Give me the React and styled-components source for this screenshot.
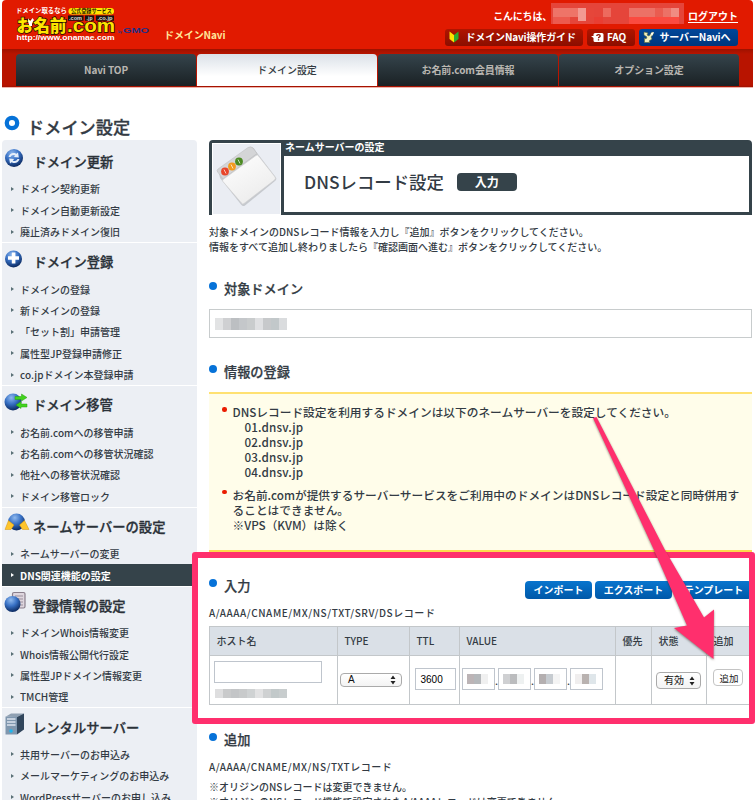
import React from "react";
import styled, { createGlobalStyle, css } from "styled-components";

const Global = createGlobalStyle`
  * { box-sizing: border-box; }
  html, body { margin: 0; padding: 0; background: #fff; }
  body {
    font-family: "Noto Sans CJK JP", "Liberation Sans", sans-serif;
    font-size: 10px;
    font-weight: 500;
    color: #333b44;
  }
  ul { list-style: none; margin: 0; padding: 0; }
  h1, h2, h3, p { margin: 0; }
`;

const Page = styled.div`
  position: relative;
  width: 755px;
  height: 800px;
  overflow: hidden;
  background: #fff;
`;

/* ---------- header ---------- */
const Header = styled.header`
  margin: 0 2px;
  width: 751px;
  height: 88px;
  border-radius: 4px 4px 0 0;
  background: #e11a00;
  border-bottom: 1px solid #eeb4ac;
  overflow: hidden;
`;
const Brand = styled.div`
  height: 49px;
  display: flex;
  justify-content: space-between;
  padding-right: 15px;
`;
const LogoWrap = styled.div`
  display: flex;
`;
const SiteName = styled.span`
  margin: 27px 0 0 11px;
  font-size: 10px;
  line-height: 16px;
  letter-spacing: -0.1px;
  font-weight: 700;
  color: #ffe69a;
`;
const Account = styled.div`
  display: flex;
  flex-direction: column;
  align-items: flex-end;
  padding-top: 3px;
`;
const Greeting = styled.div`
  display: flex;
  align-items: center;
  height: 21px;
  color: #fff;
  font-weight: 700;
  line-height: 16px;
  white-space: nowrap;
`;
const UserMask = styled.svg`
  display: block;
  margin: 0 4px 0 -1px;
`;
const Logout = styled.a`
  text-decoration: underline;
  text-underline-offset: 2px;
  padding-top: 5px;
`;
const Hello = styled.span`
  padding-top: 4px;
  letter-spacing: -0.2px;
`;
const HeaderButtons = styled.div`
  display: flex;
  gap: 4px;
  margin-top: 5px;
`;
const HeaderButton = styled.button`
  display: flex;
  align-items: center;
  width: ${(p) => p.$w}px;
  height: 17px;
  padding: 0 0 1px 4px;
  gap: ${(p) => p.$gap}px;
  border: 0;
  border-radius: 3px;
  background: ${(p) => (p.$blue ? "linear-gradient(#00479a, #00357c)" : "linear-gradient(#b01500, #8b0e00)")};
  color: #fff;
  font: 700 10px/16px "Noto Sans CJK JP", sans-serif;
  letter-spacing: -0.15px;
  white-space: nowrap;
`;
const Tabs = styled.nav`
  display: grid;
  grid-template-columns: 180px 180px 180px 180px;
  column-gap: 1px;
  height: 38px;
  padding: 5px 0 0 14px;
  background: linear-gradient(#9d1200, #b81400 5px, #b81400 36px, #a01200);
`;
const Tab = styled.a`
  height: 32px;
  border-radius: 4px 4px 0 0;
  background: ${(p) => (p.$active ? "linear-gradient(#dbe1e8, #fff 70%)" : "linear-gradient(#35444c, #1a2124)")};
  color: ${(p) => (p.$active ? "#333b42" : "#b9b6b1")};
  font-weight: ${(p) => (p.$active ? 500 : 700)};
  text-align: center;
  line-height: 31px;
  letter-spacing: -0.1px;
`;

/* ---------- columns ---------- */
const Body = styled.div`
  display: grid;
  grid-template-columns: 195px 543px;
  column-gap: 12px;
  padding-left: 2px;
`;

/* ---------- sidebar ---------- */
const Sidebar = styled.aside``;
const SideTitle = styled.h1`
  display: flex;
  align-items: flex-start;
  height: 52px;
  padding: 27px 0 0 2px;
  font-size: 17.2px;
  line-height: 24px;
  font-weight: 500;
  gap: 7px;
  -webkit-text-stroke: 0.3px currentColor;
  svg { margin-top: 0; }
`;
const Group = styled.section`
  background: #eceff4;
  border-radius: ${(p) => (p.$first ? "4px 4px 0 0" : 0)};
  padding-top: ${(p) => (p.$first ? 3 : 0)}px;
  & + & { border-top: 1px solid #fff; }
`;
const GroupTitle = styled.h2`
  display: flex;
  align-items: center;
  height: 35.15px;
  padding: 3px 0 0 2px;
  font-size: 13.3px;
  font-weight: 500;
  line-height: 20px;
  color: #2a3138;
  white-space: nowrap;
  -webkit-text-stroke: 0.3px currentColor;
  svg { margin-top: -9px; flex: none; }
  span { margin-left: ${(p) => p.$gap}px; }
`;
const Item = styled.li`
  display: flex;
  align-items: center;
  height: 21.38px;
  padding-left: 9px;
  gap: 6px;
  line-height: 21px;
  white-space: nowrap;
  ${(p) =>
    p.$active &&
    css`
      background: #35434a;
      color: #fff;
      font-weight: 700;
    `}
  &::before {
    content: "";
    border: 2px solid transparent;
    border-left: 3px solid ${(p) => (p.$active ? "#fff" : "#5a7076")};
    border-right: 0;
  }
`;

/* ---------- main ---------- */
const Main = styled.main`
  padding-top: 52px;
`;
const Panel = styled.section`
  display: grid;
  grid-template-columns: 69px 1fr;
  height: 75px;
  column-gap: 3px;
  border: 3px solid #35434a;
  border-radius: 4px 4px 0 0;
  background: #35434a;
`;
const PanelIcon = styled.div`
  background: #eaedf3;
  box-shadow: inset 0 0 0 1px #fff;
`;
const PanelBody = styled.div`
  display: grid;
  grid-template-rows: 13px 56px;
`;
const PanelKicker = styled.div`
  color: #fff;
  font-weight: 700;
  line-height: 8px;
  padding: 0 0 0 1px;
`;
const PanelTitle = styled.div`
  display: flex;
  align-items: center;
  gap: 13px;
  padding: 0 0 4px 20px;
  background: #fff;
  font-size: 17.4px;
  line-height: 24px;
`;
const Step = styled.span`
  width: 60px;
  height: 18px;
  border-radius: 4px;
  background: #35434a;
  color: #fff;
  font-size: 12px;
  font-weight: 700;
  line-height: 17px;
  text-align: center;
`;
const Lead = styled.p`
  margin-top: 9px;
  line-height: 15px;
  white-space: nowrap;
`;
const Heading = styled.h3`
  display: flex;
  align-items: center;
  height: 20px;
  margin-top: ${(p) => p.$top}px;
  padding-bottom: 1px;
  gap: 7px;
  font-size: 13.2px;
  font-weight: 500;
  line-height: 20px;
  -webkit-text-stroke: 0.25px currentColor;
  &::before {
    content: "";
    width: 8px;
    height: 8px;
    margin-bottom: 5px;
    border-radius: 50%;
    background: #0672d8;
  }
`;
const DomainBox = styled.div`
  display: flex;
  align-items: center;
  height: 29px;
  margin-top: 10px;
  padding-left: 5px;
  border: 1px solid #c8cccd;
`;
const Notes = styled.ul`
  height: 160px;
  margin-top: 10px;
  padding: 11px 0 0 13px;
  background: #fffdea;
  border-top: 2px solid #ffe171;
  border-bottom: 2px solid #fdd94d;
  font-size: 11.7px;
  line-height: 14.95px;
  white-space: nowrap;
`;
const Note = styled.li`
  display: flex;
  gap: 6px;
  margin-bottom: 8px;
  &::before {
    content: "";
    flex: none;
    width: 4.5px;
    height: 4.5px;
    margin-top: 2px;
    border-radius: 50%;
    background: #ea1c00;
  }
`;
const Servers = styled.div`
  padding-left: 12px;
  letter-spacing: 0.15px;
`;
const InputHead = styled.div`
  display: flex;
  justify-content: space-between;
  height: 20px;
  margin-top: 24px;
`;
const ActionRow = styled.div`
  display: flex;
  gap: 3px;
  margin-top: 5px;
`;
const Action = styled.button`
  width: ${(p) => p.$w}px;
  height: 18px;
  padding: 0;
  border: 0;
  border-radius: 4px;
  background: linear-gradient(#0875ce, #0058a8);
  color: #fff;
  font: 700 10px/16px "Noto Sans CJK JP", sans-serif;
`;
const RecordTypes = styled.p`
  margin-top: ${(p) => p.$top}px;
  line-height: 16px;
  letter-spacing: ${(p) => p.$ls}px;
  white-space: nowrap;
`;
const Table = styled.div`
  display: grid;
  grid-template-columns: 128px 72px 50px 156px 36px 55px 46px;
  grid-template-rows: 29px 49px;
  height: 79px;
  margin-top: 5px;
  border: solid #c3c7ca;
  border-width: 1px 0 0 1px;
`;
const Th = styled.div`
  padding-left: 6.5px;
  background: #dae0e7;
  border: solid #c3c7ca;
  border-width: 0 1px 1px 0;
  line-height: 27px;
  white-space: nowrap;
`;
const Td = styled.div`
  display: flex;
  flex-direction: ${(p) => (p.$stack ? "column" : "row")};
  align-items: flex-start;
  padding: ${(p) => p.$pad};
  border: solid #c3c7ca;
  border-width: 0 1px 1px 0;
`;
const Field = styled.div`
  display: flex;
  align-items: center;
  width: ${(p) => p.$w}px;
  height: 22px;
  padding-left: ${(p) => p.$pl ?? 5}px;
  border: 1px solid #bfc5cd;
  background: #fff;
  font: 10px "Liberation Sans", sans-serif;
  color: #000;
`;
const HostMask = styled.div`
  margin-top: 6px;
  padding-left: 1px;
`;
const Dot = styled.span`
  width: 3px;
  line-height: 26px;
`;
const Select = styled.div`
  display: flex;
  align-items: center;
  justify-content: space-between;
  width: ${(p) => p.$w}px;
  height: ${(p) => p.$h}px;
  padding: 0 5px 0 7px;
  border: 1px solid #aaa;
  border-radius: 4px;
  background: linear-gradient(#fff, #f3f3f3);
  font: 10px/12px "Liberation Sans", "Noto Sans CJK JP", sans-serif;
  color: #111;
`;
const AddButton = styled.button`
  width: 30px;
  height: 17px;
  padding: 2px 0 0 2px;
  border: 1px solid #c4c4c4;
  border-radius: 4px;
  background: #fff;
  color: #222;
  font: 400 9.5px/13px "Noto Sans CJK JP", sans-serif;
`;
const Remark = styled.p`
  margin-top: ${(p) => p.$top}px;
  line-height: 14.5px;
  white-space: nowrap;
`;

/* ---------- annotations over the page ---------- */
const Frame = styled.div`
  position: absolute;
  left: 192px;
  top: 552px;
  width: 563px;
  height: 172px;
  border: 6px solid #ff2f6d;
  border-radius: 3px;
`;
const ArrowLayer = styled.svg`
  position: absolute;
  left: 580px;
  top: 405px;
  filter: drop-shadow(0 1px 1px rgba(60, 40, 30, 0.55));
`;

/* ---------- drawings ---------- */
const Logo = () => (
  <svg width="151" height="48" viewBox="2 0 151 48">
    <g fontFamily="Noto Sans CJK JP, sans-serif" fontWeight="700">
      <text x="16" y="13" fontSize="6.4" textLength="51" lengthAdjust="spacingAndGlyphs" fill="#fff">ドメイン取るなら</text>
      <rect x="68.5" y="8" width="45.5" height="6.4" rx="3.2" fill="#ffe400" />
      <text x="71" y="13.1" fontSize="5.2" textLength="41" lengthAdjust="spacingAndGlyphs" fill="#2a1600">公式登録サービス</text>
      <text x="16.5" y="32" fontSize="17" fontWeight="900" textLength="50" lengthAdjust="spacingAndGlyphs" fill="#ffe400" stroke="#2a0d00" strokeWidth="1.6" paintOrder="stroke">お名前</text>
    </g>
    <path d="M28 18l2 3.500 2.500-3.500 1.500 2-2 3v3h-2.500l-1-3z" fill="#fff" />
    <g fontFamily="Liberation Sans, sans-serif" fontWeight="700">
      <path d="M68 15.500h15.500v5.300H68zM85 15.500h9v5.300h-9zM96 15.500h18v5.300H96z" fill="#171310" />
      <text x="67" y="32" fontSize="18" textLength="48" lengthAdjust="spacingAndGlyphs" fill="#ffe400" stroke="#2a0d00" strokeWidth="1.4" paintOrder="stroke">.com</text>
      <text x="69" y="19.6" fontSize="5" textLength="13" lengthAdjust="spacingAndGlyphs" fill="#ddd">.com</text>
      <text x="86.500" y="19.6" fontSize="5" textLength="6" fill="#ddd">.jp</text>
      <text x="97.500" y="19.6" fontSize="5" textLength="15" lengthAdjust="spacingAndGlyphs" fill="#ddd">.co.jp</text>
      <text x="16.500" y="39.500" fontSize="7" textLength="98" lengthAdjust="spacingAndGlyphs" fill="#fff">http://www.onamae.com</text>
      <text x="118" y="33.300" fontSize="4" textLength="4" lengthAdjust="spacingAndGlyphs" fill="#1c2f86">by</text>
      <text x="123" y="33.300" fontSize="7.4" textLength="26" lengthAdjust="spacingAndGlyphs" fill="#1c2f86">GMO</text>
    </g>
  </svg>
);

const maskCells = [
  [2, 5, 25, 9, "#ee7468"], [27, 5, 8, 18 - 5, "#f29a92"], [35, 5, 8, 9, "#e6463a"], [52, 5, 8, 9, "#ed6a5e"],
  [78, 5, 50, 9, "#ec7166"], [104, 5, 8, 9, "#ea5c50"], [120, 5, 8, 9, "#f08c82"], [2, 14, 17, 7, "#ec5a4e"],
  [78, 14, 50, 7, "#fb4a40"], [43, 14, 9, 7, "#e93e33"],
];
const NameMask = () => (
  <UserMask width="133" height="21">
    <rect width="133" height="21" fill="#e5453a" />
    {maskCells.map(([x, y, w, h, f], i) => (
      <rect key={i} x={x} y={y} width={w} height={h} fill={f} />
    ))}
  </UserMask>
);

/* A strip of mosaic squares hiding a value. */
const MosaicSvg = styled.svg`
  display: block;
`;
const Mosaic = ({ cells, size = 8, height = 9 }) => (
  <MosaicSvg width={cells.length * size} height={height}>
    {cells.map((c, i) => (
      <rect key={i} x={i * size} width={size} height={height} fill={c} />
    ))}
  </MosaicSvg>
);

const BeginnerIcon = () => (
  <svg width="10" height="12" viewBox="0 0 10 12">
    <path d="M0.500 0.500L5 4v7.500L0.500 8z" fill="#ffe100" />
    <path d="M9.500 0.500L5 4v7.500L9.500 8z" fill="#2dac2f" />
  </svg>
);
const FaqIcon = () => (
  <svg width="13" height="11" viewBox="0 0 13 11">
    <path d="M4 1h7q1.500 0 1.500 1.500v6q0 1.500-1.500 1.500H4Q2.500 10 2.500 8.500V6L0 4h2.500V2.500Q2.500 1 4 1z" fill="#fff" />
    <path d="M5.800 4q0-1.400 1.700-1.400T9.200 4q0 .8-1 1.200-.7.300-.7 1M7.500 7.300v1.200" fill="none" stroke="#8b1200" strokeWidth="1.300" />
  </svg>
);
const ServerNaviIcon = () => (
  <svg width="12" height="12" viewBox="0 0 12 12">
    <path d="M1 1l4 1-1 2 2 1 3-4 2 1-3 4 1 2-3 2 1 1.500H1.500V7L3 8l1-2-3-2z" fill="#f2f0c0" stroke="#5d6f3c" strokeWidth="0.600" />
    <path d="M8 2l3-1-2 4z" fill="#fff" />
  </svg>
);
const RingIcon = () => (
  <svg width="16" height="16" viewBox="0 0 16 16">
    <circle cx="8" cy="8" r="5.200" fill="#fff" stroke="#0672d8" strokeWidth="4.300" />
  </svg>
);

const Ball = ({ id, cx, cy, r }) => (
  <>
    <defs>
      <radialGradient id={id} cx="0.400" cy="0.250" r="0.750">
        <stop offset="0" stopColor="#8fb9ee" />
        <stop offset="0.500" stopColor="#3770c4" />
        <stop offset="1" stopColor="#0b2960" />
      </radialGradient>
    </defs>
    <circle cx={cx} cy={cy} r={r} fill={`url(#${id})`} />
  </>
);
const sideIcons = {
  renew: (
    <svg width="20" height="20" viewBox="0 0 20 20">
      <Ball id="b1" cx="10" cy="10" r="9" />
      <path d="M4.500 9Q6 4.500 10.500 5l2 .8L14 4.500l.8 5-5-.6 1.500-1.300Q8 6 6.500 9zM15.500 11Q14 15.500 9.500 15l-2-.8L6 15.500l-.8-5 5 .6-1.500 1.300Q12 14 13.500 11z" fill="#e6effa" />
    </svg>
  ),
  plus: (
    <svg width="20" height="20" viewBox="0 0 20 20">
      <Ball id="b2" cx="9.500" cy="11" r="8.500" />
      <path d="M7.800 4.500h3.600v3.800H15v3.500h-3.600V15.500H7.800v-3.700H4V8.300h3.800z" fill="#fff" />
    </svg>
  ),
  transfer: (
    <svg width="24" height="20" viewBox="0 0 24 20">
      <Ball id="b3" cx="9" cy="11" r="8.500" />
      <path d="M11 5.500h6.500V3L23 6.500l-5.500 3.500V8.500H11zM23 13h-6v-2.500l-5 3.500 5 3.500V16h6z" fill="#42d31d" stroke="#28a010" strokeWidth="0.500" />
    </svg>
  ),
  name: (
    <svg width="26" height="20" viewBox="0 0 26 20">
      <Ball id="b4" cx="12.500" cy="10" r="8.500" />
      <path d="M4.500 8.500L10 13l-3 4.500-6 0zM20.500 8.500L15.500 13l3 4.500 6.500 0z" fill="#ffc52b" stroke="#d39410" strokeWidth="0.500" />
    </svg>
  ),
  info: (
    <svg width="24" height="24" viewBox="0 -2 24 24">
      <rect x="8.500" y="1.500" width="12.500" height="15.500" rx="1.500" fill="#ded6de" stroke="#8a7f8c" strokeWidth="1.200" />
      <path d="M11 5h8M11 8h8M11 11h8M15 14h4" stroke="#9a8f9c" />
      <Ball id="b5" cx="8.500" cy="13" r="8" />
    </svg>
  ),
  server: (
    <svg width="22" height="24" viewBox="0 -2 22 24">
      <path d="M2 3.500L7 .500h13l-7 3.500z" fill="#8fa0b2" />
      <path d="M13 4l7-3.500v16L13 21.500z" fill="#31465c" />
      <path d="M1.500 3.500H13v18H1.500z" fill="#8097ae" />
      <path d="M3 6h8.500M3 9h8.500M3 12h8.500" stroke="#dbe4ee" strokeWidth="1.300" />
      <circle cx="7" cy="18" r="1.800" fill="#1db6ee" />
    </svg>
  ),
};

const WindowIcon = () => (
  <svg width="69" height="69" viewBox="0 0 69 69">
    <defs>
      <linearGradient id="paper" x1="0" y1="0" x2="0.600" y2="1">
        <stop offset="0" stopColor="#fff" />
        <stop offset="1" stopColor="#ececec" />
      </linearGradient>
    </defs>
    <path d="M7 30q-2-2 0-3.500L37 5q3-1.500 5 .500l2 3 20 26q1 2-1 3.500L33 62.500q-2 1.500-4-1L8 35z" fill="#aeb1b5" opacity="0.600" />
    <path d="M6 29.500q-2-2 0-3.500L36 4.500q3-1.500 5 .500l4 5.500L11 36z" fill="#d4d5d7" stroke="#bbb" strokeWidth="0.500" />
    <path d="M11 36.500L44 12.500q1.500-1 2.500.500L63 34q1 1.500-.500 3L32 60.500q-1.500 1-2.500-.500L10.500 38z" fill="url(#paper)" stroke="#d0d0d0" strokeWidth="0.600" />
    {[[13, 28.5, "#e8452a"], [20, 23.500, "#f39a1e"], [27, 18.500, "#4b8a22"]].map(([x, y, c]) => (
      <g key={c}>
        <circle cx={x} cy={y} r="3.900" fill={c} />
        <path d={`M${x - 1} ${y - 2}l2 4`} stroke="#fff" strokeWidth="1" opacity="0.700" />
      </g>
    ))}
  </svg>
);

const Updown = () => (
  <svg width="6" height="10" viewBox="0 0 6 10">
    <path d="M3 0.500L5.500 4H0.500zM3 9.500L5.500 6H0.500z" fill="#222" />
  </svg>
);

/* ---------- data ---------- */
const groups = [
  { icon: "renew", gap: 9.5, title: "ドメイン更新", items: ["ドメイン契約更新", "ドメイン自動更新設定", "廃止済みドメイン復旧"] },
  { icon: "plus", gap: 9.5, title: "ドメイン登録", items: ["ドメインの登録", "新ドメインの登録", "「セット割」申請管理", "属性型JP登録申請修正", "co.jpドメイン本登録申請"] },
  { icon: "transfer", gap: 5, title: "ドメイン移管", items: ["お名前.comへの移管申請", "お名前.comへの移管状況確認", "他社への移管状況確認", "ドメイン移管ロック"] },
  { icon: "name", gap: 3, title: "ネームサーバーの設定", items: ["ネームサーバーの変更", "DNS関連機能の設定"] },
  { icon: "info", gap: 4.5, title: "登録情報の設定", items: ["ドメインWhois情報変更", "Whois情報公開代行設定", "属性型JPドメイン情報変更", "TMCH管理"] },
  { icon: "server", gap: 7, title: "レンタルサーバー", items: ["共用サーバーのお申込み", "メールマーケティングのお申込み", "WordPressサーバーのお申し込み"] },
];
const activeItem = "DNS関連機能の設定";
const tabs = ["Navi TOP", "ドメイン設定", "お名前.com会員情報", "オプション設定"];
const columns = ["ホスト名", "TYPE", "TTL", "VALUE", "優先", "状態", "追加"];
const octets = [
  ["#bcb4b6", "#b5b8bb", "#f0f0f0"],
  ["#cfd0d2", "#bbbcbe", "#eef1f1"],
  ["#b4afb0", "#c6cbd0", "#f4f4f4"],
  ["#f0eeee", "#b9b2b0", "#dfe6ea"],
];

export default function App() {
  return (
    <Page>
      <Global />
      <Header>
        <Brand>
          <LogoWrap>
            <Logo />
            <SiteName>ドメインNavi</SiteName>
          </LogoWrap>
          <Account>
            <Greeting>
              <Hello>こんにちは、</Hello>
              <NameMask />
              <Logout>ログアウト</Logout>
            </Greeting>
            <HeaderButtons>
              <HeaderButton $w={138} $gap={6.5}><BeginnerIcon />ドメインNavi操作ガイド</HeaderButton>
              <HeaderButton $w={48} $gap={3}><FaqIcon />FAQ</HeaderButton>
              <HeaderButton $w={99} $gap={4.5} $blue><ServerNaviIcon />サーバーNaviへ</HeaderButton>
            </HeaderButtons>
          </Account>
        </Brand>
        <Tabs>
          {tabs.map((t) => (
            <Tab key={t} $active={t === "ドメイン設定"}>{t}</Tab>
          ))}
        </Tabs>
      </Header>

      <Body>
        <Sidebar>
          <SideTitle><RingIcon />ドメイン設定</SideTitle>
          {groups.map((g, i) => (
            <Group key={g.title} $first={i === 0}>
              <GroupTitle $gap={g.gap}>{sideIcons[g.icon]}<span>{g.title}</span></GroupTitle>
              <ul>
                {g.items.map((t) => (
                  <Item key={t} $active={t === activeItem}>{t}</Item>
                ))}
              </ul>
            </Group>
          ))}
        </Sidebar>

        <Main>
          <Panel>
            <PanelIcon><WindowIcon /></PanelIcon>
            <PanelBody>
              <PanelKicker>ネームサーバーの設定</PanelKicker>
              <PanelTitle>DNSレコード設定<Step>入力</Step></PanelTitle>
            </PanelBody>
          </Panel>
          <Lead>
            対象ドメインのDNSレコード情報を入力し『追加』ボタンをクリックしてください。<br />
            情報をすべて追加し終わりましたら『確認画面へ進む』ボタンをクリックしてください。
          </Lead>

          <Heading $top={25}>対象ドメイン</Heading>
          <DomainBox>
            <Mosaic cells={["#e2e3e4", "#cfd0d2", "#bcbfc2", "#c4c7ca", "#c9cccd", "#dfe0e2", "#c7c9cb", "#c2c8ca", "#dadcde"]} height={12} />
          </DomainBox>

          <Heading $top={24}>情報の登録</Heading>
          <Notes>
            <Note>
              <div>
                DNSレコード設定を利用するドメインは以下のネームサーバーを設定してください。
                <Servers>01.dnsv.jp<br />02.dnsv.jp<br />03.dnsv.jp<br />04.dnsv.jp</Servers>
              </div>
            </Note>
            <Note>
              <div>
                お名前.comが提供するサーバーサービスをご利用中のドメインはDNSレコード設定と同時併用す<br />
                ることはできません。<br />
                ※VPS（KVM）は除く
              </div>
            </Note>
          </Notes>

          <InputHead>
            <Heading $top={0}>入力</Heading>
            <ActionRow>
              <Action $w={67}>インポート</Action>
              <Action $w={77}>エクスポート</Action>
              <Action $w={77}>テンプレート</Action>
            </ActionRow>
          </InputHead>
          <RecordTypes $top={9} $ls={0.57}>A/AAAA/CNAME/MX/NS/TXT/SRV/DSレコード</RecordTypes>
          <Table>
            {columns.map((c) => (
              <Th key={c}>{c}</Th>
            ))}
            <Td $stack $pad="5px 0 0 4px">
              <Field $w={108} />
              <HostMask>
                <Mosaic cells={["#dededf", "#c9cacb", "#c3c5c7", "#c8cacb", "#cfd2d3", "#e2e2e3", "#cfd1d2", "#c2c9ca", "#c8cdce"]} />
              </HostMask>
            </Td>
            <Td $pad="17px 0 0 2px"><Select $w={62} $h={14}>A<Updown /></Select></Td>
            <Td $pad="12px 0 0 4.5px"><Field $w={41}>3600</Field></Td>
            <Td $pad="12px 0 0 2px">
              {octets.map((o, i) => (
                <React.Fragment key={i}>
                  {i > 0 && <Dot>.</Dot>}
                  <Field $w={33} $pl={4}><Mosaic cells={o} size={7} height={10} /></Field>
                </React.Fragment>
              ))}
            </Td>
            <Td $pad="0" />
            <Td $pad="16px 0 0 4px"><Select $w={45} $h={17}>有効<Updown /></Select></Td>
            <Td $pad="13px 0 0 6px"><AddButton>追加</AddButton></Td>
          </Table>

          <Heading $top={25}>追加</Heading>
          <RecordTypes $top={9} $ls={0.53}>A/AAAA/CNAME/MX/NS/TXTレコード</RecordTypes>
          <Remark $top={5}>
            ※オリジンのNSレコードは変更できません。<br />
            ※オリジンのNSレコード機能で設定されたA/AAAAレコードは変更できません。
          </Remark>
        </Main>
      </Body>

      <Frame />
      <ArrowLayer width="150" height="270" viewBox="580 405 150 270">
        <path d="M593 418L596.500 417L665 550L704 617.500L714 609.500L713.500 659L674 628L687 625.500L654 550Z" fill="#ff2f6d" />
      </ArrowLayer>
    </Page>
  );
}
